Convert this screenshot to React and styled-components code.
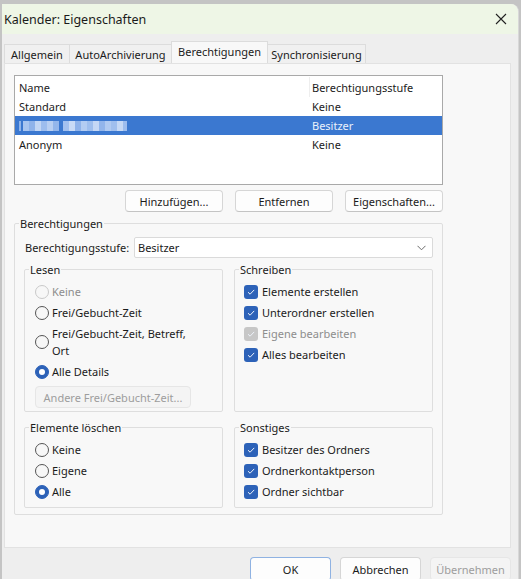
import React from "react";
import styled, { createGlobalStyle } from "styled-components";

const GlobalStyle = createGlobalStyle`
  html, body { margin: 0; padding: 0; }
  body {
    background: #c4c4c4;
    font-family: "Noto Sans", "DejaVu Sans", sans-serif;
    font-size: 11px;
    color: #1b1b1b;
    overflow: hidden;
  }
  * { box-sizing: border-box; }
`;

const Screen = styled.div`
  width: 521px;
  height: 579px;
  padding: 4px 0 0 2px;
  overflow: hidden;
`;

const Window = styled.div`
  width: 517px;
  height: 600px;
  background: #eeeeee;
  border-top-right-radius: 8px;
  border-right: 1px solid #d8d8d8;
  overflow: hidden;
`;

const TitleBar = styled.div`
  height: 30px;
  display: flex;
  align-items: center;
  justify-content: space-between;
  padding: 0 11px 0 2px;
  background: #eef6e6;
  font-size: 12.5px;
  color: #1a1a1a;
`;

const Body = styled.div`
  padding: 6px 7px 0 2px;
`;

const Tabs = styled.div`
  display: flex;
  align-items: flex-end;
  height: 23px;
`;

const Tab = styled.div`
  width: ${(p) => p.$w}px;
  height: ${(p) => (p.$active ? 22 : 19)}px;
  margin-left: -1px;
  display: flex;
  align-items: center;
  justify-content: center;
  padding-bottom: ${(p) => (p.$active ? 2 : 0)}px;
  background: ${(p) => (p.$active ? "#f8f8f8" : "#f0f0f0")};
  border: 1px solid #dcdcdc;
  border-bottom: none;
  position: relative;
  z-index: ${(p) => (p.$active ? 2 : 1)};
  &:first-child { margin-left: 0; }
`;

const Panel = styled.div`
  width: 507px;
  height: 485px;
  background: #f8f8f8;
  border: 1px solid #e2e2e2;
  padding: 11px 0 0 9px;
`;

const ListBox = styled.div`
  width: 429px;
  height: 110px;
  background: #ffffff;
  border: 1px solid #a9a9a9;
  padding-top: 1px;
`;

const ListRow = styled.div`
  display: flex;
  height: ${(p) => (p.$header ? 20 : 19)}px;
  align-items: center;
  background: ${(p) => (p.$selected ? "#3b78d0" : "transparent")};
  color: ${(p) => (p.$selected ? "#eaf1fb" : "#1b1b1b")};
`;

const NameCell = styled.div`
  width: 295px;
  height: 100%;
  display: flex;
  align-items: center;
  padding-left: 4px;
  border-right: 1px solid ${(p) => (p.$header ? "#eeeeee" : "transparent")};
`;

const LevelCell = styled.div`
  flex: 1;
  padding-left: 2px;
`;

const Blur = styled.div`
  display: flex;
  height: 10px;
`;

const BlurBlock = styled.span`
  display: block;
  width: ${(p) => p.$w}px;
  height: 100%;
  background: ${(p) => p.$c};
`;

const ButtonRow = styled.div`
  display: flex;
  justify-content: flex-end;
  gap: ${(p) => p.$gap}px;
  width: ${(p) => p.$width || "auto"};
  margin-top: ${(p) => p.$top}px;
`;

const Button = styled.div`
  width: ${(p) => p.$w}px;
  height: ${(p) => p.$h || 22}px;
  display: flex;
  align-items: center;
  justify-content: center;
  border-radius: 4px;
  background: ${(p) => (p.$disabled ? "#f4f4f4" : "#fdfdfd")};
  border: 1px solid ${(p) => (p.$default ? "#8fb2e2" : p.$disabled ? "#e6e6e6" : "#d6d6d6")};
  border-bottom-color: ${(p) => (p.$default ? "#7aa3dc" : p.$disabled ? "#e6e6e6" : "#c4c4c4")};
  color: ${(p) => (p.$disabled ? "#9d9d9d" : "#1b1b1b")};
`;

const Group = styled.fieldset`
  margin: ${(p) => p.$margin || 0};
  width: ${(p) => p.$width || "auto"};
  padding: 0;
  border: 1px solid #dedede;
  border-radius: 2px;
  min-width: 0;
`;

const Legend = styled.legend`
  margin-left: 4px;
  padding: 0 1px;
  line-height: 15px;
`;

const GroupBody = styled.div`
  padding: ${(p) => p.$pad};
  display: flex;
  flex-direction: column;
`;

const LevelRow = styled.div`
  display: flex;
  align-items: center;
  margin-top: 6px;
`;

const LevelLabel = styled.div`
  width: 110px;
  padding-left: 1px;
`;

const Select = styled.div`
  flex: 1;
  height: 21px;
  display: flex;
  align-items: center;
  justify-content: space-between;
  padding: 0 6px 0 3px;
  background: #ffffff;
  border: 1px solid #dadada;
  border-radius: 2px;
`;

const Grid = styled.div`
  display: grid;
  grid-template-columns: 199px 199px;
  column-gap: 11px;
  row-gap: 8px;
  margin-top: 4px;
`;

const Option = styled.div`
  display: flex;
  align-items: center;
  padding: 2px 0;
  min-height: 21px;
  line-height: 17px;
  color: ${(p) => (p.$disabled ? "#8d8d8d" : "#1b1b1b")};
`;

const RadioMark = styled.span`
  flex: none;
  width: 14px;
  height: 14px;
  margin-right: 3px;
  border-radius: 50%;
  display: flex;
  align-items: center;
  justify-content: center;
  background: ${(p) => (p.$checked ? "#2d62b8" : "#f7f7f7")};
  border: 1px solid ${(p) => (p.$checked ? "#2d62b8" : p.$disabled ? "#c9c9c9" : "#555555")};
  &::after {
    content: "";
    display: ${(p) => (p.$checked ? "block" : "none")};
    width: 6px;
    height: 6px;
    border-radius: 50%;
    background: #ffffff;
  }
`;

const CheckMark = styled.span`
  flex: none;
  width: 14px;
  height: 14px;
  margin-right: 4px;
  border-radius: 3px;
  display: flex;
  align-items: center;
  justify-content: center;
  background: ${(p) => (p.$disabled ? "#c7c7c7" : "#2d62b8")};
`;

const SubButton = styled(Button)`
  margin-top: 4px;
`;

const Radio = ({ checked, disabled, children }) => (
  <Option $disabled={disabled}>
    <RadioMark $checked={checked} $disabled={disabled} />
    <span>{children}</span>
  </Option>
);

const Check = ({ disabled, children }) => (
  <Option $disabled={disabled}>
    <CheckMark $disabled={disabled}>
      <svg width="10" height="10" viewBox="0 0 10 10">
        <path d="M2 5.2 L4.1 7.2 L8.2 2.9" fill="none" stroke="#eef3fb" strokeWidth="1" />
      </svg>
    </CheckMark>
    <span>{children}</span>
  </Option>
);

const blurBlocks = [
  [2, "#8fb4ea"], [2, "#3b78d0"], [6, "#a8c5f0"], [6, "#8fb3ea"], [6, "#c2d6f4"], [6, "#9dbdee"],
  [6, "#b8cff2"], [6, "#93b6eb"], [4, "#3b78d0"], [6, "#a2c0ef"], [6, "#c9dbf6"], [6, "#8fb3ea"],
  [6, "#b3ccf2"], [6, "#9ebeee"], [6, "#c4d7f5"], [6, "#92b5eb"], [6, "#b0caf1"], [6, "#a0bfee"],
  [6, "#c6d9f5"], [4, "#9dbdee"],
];

const entries = [
  { name: "Standard", level: "Keine" },
  { blur: true, level: "Besitzer", selected: true },
  { name: "Anonym", level: "Keine" },
];

export default function App() {
  return (
    <Screen>
      <GlobalStyle />
      <Window>
        <TitleBar>
          <span>Kalender: Eigenschaften</span>
          <svg width="12" height="12" viewBox="0 0 12 12">
            <path d="M1 1 L11 11 M11 1 L1 11" stroke="#222" strokeWidth="1.1" />
          </svg>
        </TitleBar>
        <Body>
          <Tabs>
            <Tab $w={66}>Allgemein</Tab>
            <Tab $w={103}>AutoArchivierung</Tab>
            <Tab $w={97} $active>Berechtigungen</Tab>
            <Tab $w={99}>Synchronisierung</Tab>
          </Tabs>
          <Panel>
            <ListBox>
              <ListRow $header>
                <NameCell $header>Name</NameCell>
                <LevelCell>Berechtigungsstufe</LevelCell>
              </ListRow>
              {entries.map((e) => (
                <ListRow key={e.level + (e.name || "x")} $selected={e.selected}>
                  <NameCell>
                    {e.blur ? (
                      <Blur>
                        {blurBlocks.map(([w, c], i) => (
                          <BlurBlock key={i} $w={w} $c={c} />
                        ))}
                      </Blur>
                    ) : (
                      e.name
                    )}
                  </NameCell>
                  <LevelCell>{e.level}</LevelCell>
                </ListRow>
              ))}
            </ListBox>
            <ButtonRow $gap={12} $top={5} $width="429px">
              <Button $w={98}>Hinzufügen...</Button>
              <Button $w={98}>Entfernen</Button>
              <Button $w={98}>Eigenschaften...</Button>
            </ButtonRow>
            <Group $margin="4px 0 0 0" $width="429px">
              <Legend>Berechtigungen</Legend>
              <GroupBody $pad="0 9px 6px 9px">
                <LevelRow>
                  <LevelLabel>Berechtigungsstufe:</LevelLabel>
                  <Select>
                    <span>Besitzer</span>
                    <svg width="9" height="6" viewBox="0 0 9 6">
                      <path d="M0.5 0.8 L4.5 4.8 L8.5 0.8" fill="none" stroke="#6b6b6b" strokeWidth="1" />
                    </svg>
                  </Select>
                </LevelRow>
                <Grid>
                  <Group>
                    <Legend>Lesen</Legend>
                    <GroupBody $pad="4px 9px 3px 10px">
                      <Radio disabled>Keine</Radio>
                      <Radio>Frei/Gebucht-Zeit</Radio>
                      <Radio>
                        Frei/Gebucht-Zeit, Betreff,
                        <br />
                        Ort
                      </Radio>
                      <Radio checked>Alle Details</Radio>
                      <SubButton $w={156} $disabled>
                        Andere Frei/Gebucht-Zeit...
                      </SubButton>
                    </GroupBody>
                  </Group>
                  <Group>
                    <Legend>Schreiben</Legend>
                    <GroupBody $pad="4px 9px 3px 9px">
                      <Check>Elemente erstellen</Check>
                      <Check>Unterordner erstellen</Check>
                      <Check disabled>Eigene bearbeiten</Check>
                      <Check>Alles bearbeiten</Check>
                    </GroupBody>
                  </Group>
                  <Group>
                    <Legend>Elemente löschen</Legend>
                    <GroupBody $pad="4px 9px 5px 10px">
                      <Radio>Keine</Radio>
                      <Radio>Eigene</Radio>
                      <Radio checked>Alle</Radio>
                    </GroupBody>
                  </Group>
                  <Group>
                    <Legend>Sonstiges</Legend>
                    <GroupBody $pad="4px 9px 5px 9px">
                      <Check>Besitzer des Ordners</Check>
                      <Check>Ordnerkontaktperson</Check>
                      <Check>Ordner sichtbar</Check>
                    </GroupBody>
                  </Group>
                </Grid>
              </GroupBody>
            </Group>
          </Panel>
          <ButtonRow $gap={9} $top={9}>
            <Button $w={81} $h={24} $default>OK</Button>
            <Button $w={81} $h={24}>Abbrechen</Button>
            <Button $w={81} $h={24} $disabled>Übernehmen</Button>
          </ButtonRow>
        </Body>
      </Window>
    </Screen>
  );
}
